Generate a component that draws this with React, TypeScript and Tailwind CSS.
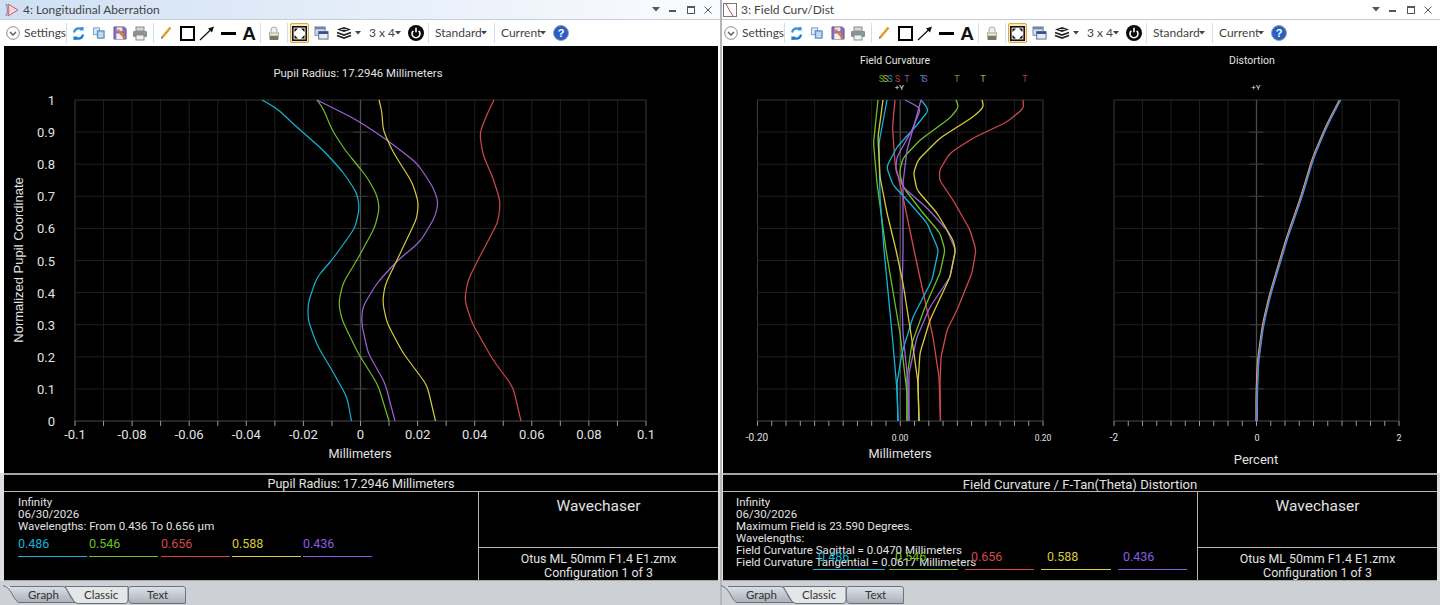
import React from "react";

type P = [number, number];
const C = { cyan: "#14b4d6", green: "#6fc11f", red: "#d2474c", yellow: "#d6cb3c", purple: "#9b62d8" };

function smooth(pts: P[], win: number, dx = 0): string {
  const y0 = pts[0][1];
  const y1 = pts[pts.length - 1][1];
  let xs: number[] = [];
  let seg = 0;
  for (let y = y0; y <= y1; y++) {
    while (seg < pts.length - 2 && y > pts[seg + 1][1]) seg++;
    const a = pts[seg];
    const b = pts[seg + 1];
    xs.push(a[0] + ((b[0] - a[0]) * (y - a[1])) / (b[1] - a[1]));
  }
  for (let pass = 0; pass < 3; pass++) {
    xs = xs.map((_, i) => {
      const h = Math.min(win, i, xs.length - 1 - i);
      let s = 0;
      for (let j = i - h; j <= i + h; j++) s += xs[j];
      return s / (2 * h + 1);
    });
  }
  return xs.map((x, i) => `${i === 0 ? "M" : "L"}${(x + dx).toFixed(2)},${y0 + i}`).join(" ");
}

const LA: [string, P[]][] = [
  [C.cyan, [[262, 100], [277, 108], [290, 121], [323, 150], [343, 172], [357, 193], [359.5, 208], [355, 228], [332, 260], [317, 277], [308, 303], [308, 320], [317, 345], [333, 372], [347, 397], [351.5, 421]]],
  [C.green, [[317, 100], [323, 108], [332, 130], [345, 150], [367, 177], [377, 195], [379.5, 208], [375, 227], [357, 260], [343, 283], [338.5, 303], [342, 320], [358, 353], [378, 385], [389, 421]]],
  [C.purple, [[317, 100], [357, 120], [387, 140], [417, 163], [433, 187], [438.5, 202], [435, 217], [420, 242], [398, 260], [377, 283], [362.5, 307], [361.5, 323], [368, 353], [385, 383], [395, 421]]],
  [C.yellow, [[379, 100], [382, 112], [383, 130], [393, 152], [412, 182], [418.5, 202], [417, 218], [397, 260], [385, 285], [382.5, 302], [387, 323], [403, 353], [427, 385], [435.5, 421]]],
  [C.red, [[494, 100], [488, 112], [479.5, 133], [483, 155], [493, 178], [500.5, 202], [498, 222], [478, 260], [468, 280], [464.5, 300], [472, 323], [493, 360], [513, 387], [521, 421]]],
];

const FC: [string, P[]][] = [
  [C.red, [[1023, 100], [1024, 108], [1007, 122], [973, 138], [950, 153], [939.5, 170], [939.5, 180], [953, 200], [970, 230], [976, 250], [972, 273], [957, 310], [947, 330], [941, 357], [940, 383], [940.5, 421]]],
  [C.red, [[895, 100], [892.5, 127], [895, 163], [903, 197], [914, 250], [922, 287], [933, 337], [939, 377], [940.5, 421]]],
  [C.green, [[956, 100], [959, 107], [950, 118], [920, 140], [903, 158], [899.5, 172], [903, 187], [923, 213], [940, 233], [945, 250], [940, 273], [925, 307], [912, 343], [907, 377], [907, 421]]],
  [C.green, [[878, 100], [873.5, 143], [877, 183], [886, 250], [900, 333], [907, 393], [907, 421]]],
  [C.cyan, [[921, 100], [929, 110], [917, 125], [897, 147], [886.5, 167], [893, 185], [907, 200], [927, 223], [938.5, 250], [932, 280], [913, 317], [902, 353], [897, 383], [898, 421]]],
  [C.cyan, [[887, 100], [879, 143], [880, 197], [884, 250], [892, 333], [897, 390], [898, 421]]],
  [C.purple, [[905, 100], [921, 108], [912, 130], [897, 157], [895.5, 170], [903, 187], [927, 208], [947, 230], [955.5, 250], [950, 277], [930, 307], [917, 337], [909, 373], [909, 421]]],
  [C.purple, [[921, 100], [915, 122], [907, 150], [903, 183], [903, 250], [902, 300], [903, 333], [908, 383], [909, 421]]],
  [C.yellow, [[982, 100], [984, 107], [973, 117], [940, 138], [918, 160], [913.5, 173], [917, 190], [937, 213], [953, 240], [955.5, 250], [950, 277], [930, 320], [920, 353], [918, 383], [919, 421]]],
  [C.yellow, [[883, 100], [878, 137], [880, 177], [887, 213], [896, 250], [903, 283], [913, 347], [918, 383], [919, 421]]],
];

const DIST: P[] = [[1340, 100], [1327, 125], [1313, 158], [1302, 195], [1287, 238], [1270, 295], [1263, 325], [1258, 362], [1256.7, 395], [1256.7, 421]];

function Grid({ x0, x1, cols, ticks }: { x0: number; x1: number; cols: number; ticks: number }) {
  const y0 = 100;
  const y1 = 421;
  const cx = (x0 + x1) / 2;
  const rows = Array.from({ length: 11 }, (_, i) => y0 + (i * (y1 - y0)) / 10);
  const vs = Array.from({ length: cols + 1 }, (_, i) => x0 + (i * (x1 - x0)) / cols);
  const ts = Array.from({ length: ticks + 1 }, (_, i) => x0 + (i * (x1 - x0)) / ticks);
  return (
    <g>
      {vs.map((x, i) => (
        <line key={i} x1={x} x2={x} y1={y0} y2={y1} stroke={i === 0 || i === cols ? "#3a3a3a" : "#1f1f1f"} strokeWidth="1" />
      ))}
      {rows.map((y, i) => (
        <line key={i} x1={x0} x2={x1} y1={y} y2={y} stroke={i === 0 ? "#333333" : i === 10 ? "#4a4a4a" : "#1f1f1f"} strokeWidth="1" />
      ))}
      <line x1={cx} x2={cx} y1={y0} y2={y1} stroke="#4a4a4a" strokeWidth="1.3" />
      {rows.slice(1, 10).map((y, i) => (
        <line key={i} x1={cx - 7} x2={cx + 7} y1={y} y2={y} stroke="#3c3c3c" strokeWidth="1" />
      ))}
      {ts.map((x, i) => (
        <line key={i} x1={x} x2={x} y1={y1} y2={y1 + 5} stroke="#9a9a9a" strokeWidth="1" />
      ))}
    </g>
  );
}

const textCls = "fill-[#e2e2e2]";

function LeftChart() {
  const yl = ["1", "0.9", "0.8", "0.7", "0.6", "0.5", "0.4", "0.3", "0.2", "0.1", "0"];
  const xl = ["-0.1", "-0.08", "-0.06", "-0.04", "-0.02", "0", "0.02", "0.04", "0.06", "0.08", "0.1"];
  return (
    <svg viewBox="4 46 714 427" className="block w-[714px] h-[427px] bg-black shrink-0">
      <text x="358" y="77" textAnchor="middle" fontSize="11.4" className={textCls}>Pupil Radius: 17.2946 Millimeters</text>
      <Grid x0={75} x1={646} cols={20} ticks={20} />
      {LA.map(([c, p], i) => (
        <path key={i} d={smooth(p, 4)} fill="none" stroke={c} strokeWidth="1.2" />
      ))}
      {yl.map((t, i) => (
        <text key={t} x="55" y={105 + i * 32.1} textAnchor="end" fontSize="13" className={textCls}>{t}</text>
      ))}
      {xl.map((t, i) => (
        <text key={t} x={75 + i * 57.1} y="439" textAnchor="middle" fontSize="13" className={textCls}>{t}</text>
      ))}
      <text x="360" y="458" textAnchor="middle" fontSize="12.7" className={textCls}>Millimeters</text>
      <text transform="translate(23,260) rotate(-90)" textAnchor="middle" fontSize="13" className={`${textCls} font-['Liberation_Sans']`}>Normalized Pupil Coordinate</text>
    </svg>
  );
}

function RightChart() {
  const marks: [number, string, string][] = [
    [881.5, "S", C.green], [885.5, "S", C.yellow], [890, "S", C.cyan], [897.5, "S", C.red], [907, "T", C.purple],
    [922.5, "T", C.cyan], [925, "S", C.purple], [957, "T", C.green], [983, "T", C.yellow], [1025, "T", C.red],
  ];
  return (
    <svg viewBox="723 46 714 427" className="block w-[714px] h-[427px] bg-black shrink-0">
      <text x="895" y="63.5" textAnchor="middle" fontSize="10.5" className={textCls}>Field Curvature</text>
      <text x="1252" y="63.5" textAnchor="middle" fontSize="10.5" className={textCls}>Distortion</text>
      {marks.map(([x, t, c], i) => (
        <text key={i} x={x} y="82" textAnchor="middle" fontSize="9" fill={c} opacity="0.85">{t}</text>
      ))}
      <text x="899.5" y="90" textAnchor="middle" fontSize="8" className={textCls}>+Y</text>
      <text x="1256" y="90" textAnchor="middle" fontSize="8" className={textCls}>+Y</text>
      <Grid x0={757.5} x1={1043} cols={10} ticks={20} />
      <Grid x0={1114} x1={1399} cols={10} ticks={20} />
      {FC.map(([c, p], i) => (
        <path key={i} d={smooth(p, 2)} fill="none" stroke={c} strokeWidth="1.3" />
      ))}
      <path d={smooth(DIST, 5, -0.7)} fill="none" stroke={C.yellow} strokeWidth="1.2" />
      <path d={smooth(DIST, 5, 0.7)} fill="none" stroke={C.cyan} strokeWidth="1.2" />
      <path d={smooth(DIST, 5, 0)} fill="none" stroke={C.purple} strokeWidth="1.2" />
      <text x="757" y="441" textAnchor="middle" fontSize="10" className={textCls}>-0.20</text>
      <text x="900" y="441" textAnchor="middle" fontSize="8.5" className={textCls}>0.00</text>
      <text x="1043" y="441" textAnchor="middle" fontSize="8.5" className={textCls}>0.20</text>
      <text x="1114" y="441" textAnchor="middle" fontSize="10" className={textCls}>-2</text>
      <text x="1257" y="441" textAnchor="middle" fontSize="9" className={textCls}>0</text>
      <text x="1399" y="441" textAnchor="middle" fontSize="9" className={textCls}>2</text>
      <text x="900" y="458" textAnchor="middle" fontSize="12.7" className={textCls}>Millimeters</text>
      <text x="1256" y="464" textAnchor="middle" fontSize="13" className={textCls}>Percent</text>
    </svg>
  );
}

function Sep({ className = "" }: { className?: string }) {
  return <span className={`w-px h-[20px] bg-[#cfdfee] shrink-0 ${className}`} />;
}

function Slot({ w, children }: { w: string; children: React.ReactNode }) {
  return <span className={`flex items-center justify-center shrink-0 ${w}`}>{children}</span>;
}

function Caret({ className = "" }: { className?: string }) {
  return (
    <svg width="6" height="4" viewBox="0 0 6 4" className={`shrink-0 ${className}`}>
      <path d="M0 0h6L3 3.5z" fill="#444" />
    </svg>
  );
}

function Toolbar({ pad }: { pad: string }) {
  const label = "text-[12px] text-[#444] whitespace-nowrap shrink-0 font-['Lato']";
  return (
    <div className={`h-[26px] bg-white flex items-center shrink-0 ${pad}`}>
      <svg width="14" height="14" viewBox="0 0 14 14" className="shrink-0">
        <circle cx="7" cy="7" r="6.3" fill="#fff" stroke="#8a8a8a" />
        <path d="M4 6l3 3 3-3" fill="none" stroke="#555" strokeWidth="1.3" />
      </svg>
      <span className={`ml-[4px] w-[38px] ${label}`}>Settings</span>
      <Sep className="ml-[4px]" />
      <Slot w="w-[22px]">
        <svg width="13" height="15" viewBox="0 0 16 16" preserveAspectRatio="none">
          <path d="M2.5 7a5.5 5.5 0 0 1 9.5-2.6" fill="none" stroke="#2b8fe3" strokeWidth="2.6" />
          <path d="M10 1l4.5.3-.6 4.6z" fill="#2b8fe3" />
          <path d="M13.5 9A5.5 5.5 0 0 1 4 11.6" fill="none" stroke="#1b78cf" strokeWidth="2.6" />
          <path d="M6 15l-4.5-.3.6-4.6z" fill="#1b78cf" />
        </svg>
      </Slot>
      <Slot w="w-[20px]">
        <svg width="14" height="12" viewBox="0 0 15 14">
          <rect x="1" y="1" width="7" height="8" fill="#dbe8f6" stroke="#6f95c4" />
          <rect x="5.5" y="4.5" width="8" height="8.5" fill="#9ec2e8" stroke="#3f78bd" />
          <path d="M7 7h5M7 9h5M7 11h5" stroke="#fff" strokeWidth="0.8" />
        </svg>
      </Slot>
      <Slot w="w-[22px]">
        <svg width="15" height="14" viewBox="0 0 16 15">
          <path d="M1 1h11l2 2v11H1z" fill="#8a6fb8" stroke="#6d5499" />
          <rect x="4" y="1.5" width="6" height="4" fill="#e8e2f2" />
          <rect x="3.5" y="8" width="7" height="6" fill="#f0edf6" />
          <path d="M5 4l8 9.5" stroke="#dd7b2a" strokeWidth="2.2" />
        </svg>
      </Slot>
      <Slot w="w-[18px]">
        <svg width="16" height="15" viewBox="0 0 16 15">
          <rect x="4" y="1" width="8" height="4" fill="#d6d6d6" stroke="#8b8b8b" />
          <rect x="1" y="5" width="14" height="6" rx="1" fill="#8c9094" />
          <rect x="4" y="9" width="8" height="5" fill="#eef2f4" stroke="#8b8b8b" />
          <circle cx="12.5" cy="7" r="0.8" fill="#3bd2c0" />
        </svg>
      </Slot>
      <Sep className="ml-[4px]" />
      <Slot w="w-[24px]">
        <svg width="13" height="14" viewBox="0 0 13 14">
          <path d="M10.5 1.5L2.5 11" stroke="#e39a2a" strokeWidth="2.4" />
          <path d="M3.2 11.8L1 13l.5-2.7z" fill="#555" />
        </svg>
      </Slot>
      <Slot w="w-[18px]">
        <span className="w-[15px] h-[15px] border-2 border-black block" />
      </Slot>
      <Slot w="w-[22px]">
        <svg width="16" height="15" viewBox="0 0 16 15">
          <path d="M1 14L13 2.5" stroke="#111" strokeWidth="1.2" />
          <path d="M15 0.5L9 2.5l4 4z" fill="#111" />
        </svg>
      </Slot>
      <Slot w="w-[20px]">
        <span className="w-[15px] h-[3px] bg-black block" />
      </Slot>
      <Slot w="w-[22px]">
        <span className="font-['Liberation_Sans'] font-bold text-[19px] leading-none text-[#111]">A</span>
      </Slot>
      <Sep />
      <Slot w="w-[26px]">
        <svg width="12" height="15" viewBox="0 0 12 15">
          <path d="M3 7V4a3 3 0 0 1 6 0v3" fill="#f0f0f0" stroke="#a8a8a8" />
          <rect x="1.5" y="7" width="9" height="3" fill="#f5ecbc" stroke="#a8a8a8" />
          <rect x="1.5" y="10" width="9" height="4" rx="1" fill="#77776a" />
        </svg>
      </Slot>
      <Sep />
      <span className="ml-[2px] w-[19px] h-[20px] rounded-[2px] border border-[#e3a63f] bg-[#fbe8b8] flex items-center justify-center shrink-0">
        <svg width="15" height="15" viewBox="0 0 15 15">
          <rect x="0.8" y="0.8" width="13.4" height="13.4" fill="#fff" stroke="#111" strokeWidth="1.6" />
          <path d="M2.5 2.5h3.5L2.5 6zM12.5 2.5H9l3.5 3.5zM2.5 12.5H6L2.5 9zM12.5 12.5H9l3.5-3.5z" fill="#111" />
        </svg>
      </span>
      <Slot w="w-[24px]">
        <svg width="15" height="14" viewBox="0 0 16 15">
          <rect x="1" y="1" width="11" height="9" fill="#cfd9e8" stroke="#7b8ba3" />
          <rect x="1" y="1" width="11" height="2.5" fill="#6f86ad" />
          <rect x="5" y="6" width="10" height="8" fill="#e6edf6" stroke="#55698c" />
          <rect x="5" y="6" width="10" height="2.5" fill="#34508a" />
        </svg>
      </Slot>
      <Slot w="w-[22px]">
        <svg width="16" height="14" viewBox="0 0 16 14">
          <path d="M8 1l7 2.5L8 6 1 3.5z" fill="#222" />
          <path d="M1 6.5L8 9l7-2.5M1 9.5L8 12l7-2.5" fill="none" stroke="#222" strokeWidth="1.8" />
          <path d="M5 3.5h6" stroke="#fff" strokeWidth="0.8" />
        </svg>
      </Slot>
      <Slot w="w-[6px]"><Caret /></Slot>
      <span className={`ml-[8px] w-[23px] ${label}`}>3 x 4</span>
      <Caret className="ml-[3px]" />
      <span className="ml-[7px] shrink-0 flex">
        <svg width="16" height="16" viewBox="0 0 16 16">
          <circle cx="8" cy="8" r="8" fill="#0a0a0a" />
          <path d="M5.3 5.8A4 4 0 1 0 10.7 5.8" fill="none" stroke="#fff" strokeWidth="1.6" />
          <path d="M8 2.8v4.4" stroke="#fff" strokeWidth="1.6" />
        </svg>
      </span>
      <Sep className="ml-[4px]" />
      <span className={`ml-[6px] w-[43px] ${label}`}>Standard</span>
      <Caret className="ml-[3px]" />
      <Sep className="ml-[7px]" />
      <span className={`ml-[6px] w-[36px] ${label}`}>Current</span>
      <Caret className="ml-[3px]" />
      <span className="ml-[7px] w-[16px] h-[16px] rounded-full bg-[#2a5fc0] border border-[#8da3c4] flex items-center justify-center text-white font-bold text-[11px] leading-none font-['Liberation_Sans'] shrink-0">?</span>
    </div>
  );
}

function TitleBar({ title, active, pad, icon }: { title: string; active: boolean; pad: string; icon: React.ReactNode }) {
  return (
    <div className={`h-[20px] flex items-center shrink-0 border-b border-[#c6ccd3] ${pad} ${active ? "bg-gradient-to-r from-[#cfe0f4] to-[#fbfcfe]" : "bg-white"}`}>
      <span className="w-[14px] h-[16px] shrink-0 flex items-center">{icon}</span>
      <span className="ml-[4px] text-[12px] leading-none text-[#444] font-['Lato'] whitespace-nowrap">{title}</span>
      <span className="ml-auto flex items-center shrink-0">
        <svg width="8" height="5" viewBox="0 0 8 5" className="mr-[9px]"><path d="M0 0h8L4 4.5z" fill="#555" /></svg>
        <span className="w-[7px] h-[2px] bg-[#555] mt-[2px] mr-[11px]" />
        <span className="w-[8px] h-[8px] border border-[#555] border-t-2 mr-[9px]" />
        <svg width="8" height="8" viewBox="0 0 8 8" className="mr-[8px]"><path d="M0.5 0.5l7 7M7.5 0.5l-7 7" stroke="#555" strokeWidth="1" /></svg>
      </span>
    </div>
  );
}

function Legend({ className = "", rowH, items }: { className?: string; rowH: string; items: { w: string; ml: string; pl: string }[] }) {
  const data = [["0.486", "text-[#14b4d6]", "border-[#14b4d6]"], ["0.546", "text-[#6fc11f]", "border-[#6fc11f]"], ["0.656", "text-[#d2474c]", "border-[#d2474c]"], ["0.588", "text-[#d6cb3c]", "border-[#d6cb3c]"], ["0.436", "text-[#8a5de0]", "border-[#8a5de0]"]];
  return (
    <div className={`flex ${className}`}>
      {data.map((d, i) => (
        <div key={d[0]} className={`${items[i].w} ${items[i].ml} ${items[i].pl} border-b ${d[2]} ${rowH} ${d[1]} text-[12.5px] leading-[14px]`}>
          {d[0]}
        </div>
      ))}
    </div>
  );
}

function Tabs({ inner }: { inner: string }) {
  return (
    <div className="flex-1 bg-[#cdd0d5]">
      <div className={`relative h-[21px] w-[190px] mt-[3px] ${inner}`}>
        <svg width="190" height="21" viewBox="0 0 190 21" className="absolute inset-0">
          <defs>
            <linearGradient id="tabg" x1="0" y1="0" x2="0" y2="1">
              <stop offset="0" stopColor="#dfe2e7" />
              <stop offset="1" stopColor="#aab0bb" />
            </linearGradient>
          </defs>
          <path d="M65 2.5H128V16Q128 19.5 125 19.5H78Q74 19.5 72 14z" fill="#e4e6e8" stroke="#6a7480" />
          <path d="M3 1.5Q8 2.5 11 8Q15 16 18 18.5H75Q71 15 68 8Q66 2.5 63 2.5H10" fill="url(#tabg)" stroke="#6a7480" />
          <path d="M128.5 5Q128.5 2.5 131 2.5H183Q185.5 2.5 185.5 5V19.5H132Q128.5 19.5 128.5 16z" fill="url(#tabg)" stroke="#6a7480" />
        </svg>
        <div className="relative flex items-center h-[21px] text-[11.5px] text-[#333] font-['Lato'] pt-[1px]">
          <span className="ml-[28px] w-[30px]">Graph</span>
          <span className="ml-[26px] w-[34px]">Classic</span>
          <span className="ml-[29px] w-[20px]">Text</span>
        </div>
      </div>
    </div>
  );
}

function Footer({ header, children, headerCls }: { header: string; children: React.ReactNode; headerCls: string }) {
  return (
    <div className="w-[714px] shrink-0 bg-black text-[#e2e2e2] border-t-2 border-b border-[#a6a6a6]">
      <div className={`h-[17px] flex items-center justify-center border-b border-[#b5b5b5] leading-none pt-[3px] ${headerCls}`}>{header}</div>
      <div className="flex h-[88px]">
        <div className="relative w-[475px] border-r border-[#b5b5b5] shrink-0">{children}</div>
        <div className="flex-1 flex flex-col">
          <div className="h-[56px] border-b border-[#b5b5b5] flex justify-center pt-[4px] text-[15.5px] leading-[20px]">Wavechaser</div>
          <div className="flex-1 flex flex-col items-center text-[12.4px] leading-[14px] pt-[4px]">
            <span>Otus ML 50mm F1.4 E1.zmx</span>
            <span>Configuration 1 of 3</span>
          </div>
        </div>
      </div>
    </div>
  );
}

export default function App() {
  return (
    <div className="w-[1440px] h-[605px] flex overflow-hidden bg-white font-['Roboto',sans-serif]">
      <div className="w-[720px] h-[605px] flex flex-col shrink-0 bg-white">
        <TitleBar
          title="4: Longitudinal Aberration"
          active
          pad="pl-[5px]"
          icon={
            <svg width="14" height="16" viewBox="0 0 14 16">
              <path d="M1 2Q4 8 1 14" fill="none" stroke="#8d9aa8" strokeWidth="1.4" />
              <path d="M3 2L13 8 3 14Q5 8 3 2z" fill="#f3d9dd" stroke="#c9606c" />
            </svg>
          }
        />
        <Toolbar pad="pl-[6px]" />
        <div className="pl-[4px]"><LeftChart /></div>
        <div className="pl-[4px] bg-[#dcdfe3] flex">
          <Footer header="Pupil Radius: 17.2946 Millimeters" headerCls="text-[12.6px]">
            <div className="text-[11.5px] leading-[12px] pl-[14px] pt-[4px]">
              <div>Infinity</div>
              <div>06/30/2026</div>
              <div>Wavelengths: From 0.436 To 0.656 µm</div>
            </div>
            <Legend
              className="pl-[14px] mt-[5px]"
              rowH="h-[20px]"
              items={[
                { w: "w-[69px]", ml: "", pl: "" },
                { w: "w-[69px]", ml: "ml-[2px]", pl: "" },
                { w: "w-[69px]", ml: "ml-[3px]", pl: "" },
                { w: "w-[69px]", ml: "ml-[2px]", pl: "" },
                { w: "w-[69px]", ml: "ml-[2px]", pl: "" },
              ]}
            />
          </Footer>
          <div className="flex-1 bg-[#dcdfe3]" />
        </div>
        <Tabs inner="" />
      </div>
      <div className="w-[720px] h-[605px] flex flex-col shrink-0 bg-white border-l-2 border-[#b3b7bc]">
        <TitleBar
          title="3: Field Curv/Dist"
          active={false}
          pad="pl-[1px]"
          icon={
            <svg width="14" height="16" viewBox="0 0 14 16">
              <rect x="0.5" y="1.5" width="13" height="13" fill="#fff" stroke="#777" />
              <path d="M3 2Q6 8 10 14" fill="none" stroke="#d2474c" />
            </svg>
          }
        />
        <Toolbar pad="pl-[2px]" />
        <div className="pl-[1px]"><RightChart /></div>
        <div className="pl-[1px] bg-[#dcdfe3] flex">
          <Footer header="Field Curvature / F-Tan(Theta) Distortion" headerCls="text-[13.1px]">
            <div className="text-[11.5px] leading-[12px] pl-[13px] pt-[4px]">
              <div>Infinity</div>
              <div>06/30/2026</div>
              <div>Maximum Field is 23.590 Degrees.</div>
              <div>Wavelengths:</div>
              <div>Field Curvature Sagittal = 0.0470 Millimeters</div>
              <div>Field Curvature Tangential = 0.0617 Millimeters</div>
            </div>
            <div className="absolute left-[90px] top-[58px]">
              <Legend
                rowH="h-[20px]"
                items={[
                  { w: "w-[72px]", ml: "", pl: "pl-[5px]" },
                  { w: "w-[69px]", ml: "ml-[4px]", pl: "pl-[6px]" },
                  { w: "w-[69px]", ml: "ml-[7px]", pl: "pl-[6px]" },
                  { w: "w-[70px]", ml: "ml-[7px]", pl: "pl-[6px]" },
                  { w: "w-[69px]", ml: "ml-[7px]", pl: "pl-[5px]" },
                ]}
              />
            </div>
          </Footer>
          <div className="flex-1 bg-[#dcdfe3]" />
        </div>
        <Tabs inner="-ml-[4px]" />
      </div>
    </div>
  );
}
